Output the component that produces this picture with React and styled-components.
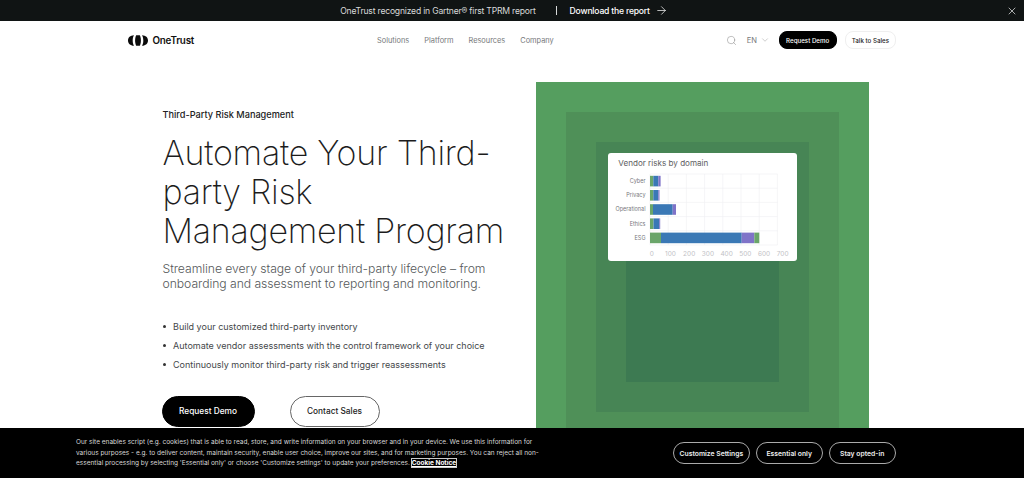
import styled, { createGlobalStyle } from "styled-components";
import { ArrowRight, ChevronDown, Search, X } from "lucide-react";

const GlobalStyle = createGlobalStyle`
  html, body {
    margin: 0;
    padding: 0;
    background: #fff;
    font-family: Inter, "Liberation Sans", sans-serif;
    overflow: hidden;
  }
`;

const GREEN = "#6aa56a";
const BLUE = "#3a78b5";
const PURPLE = "#7f73c8";

// bar segments are in chart pixels, read straight off the picture
const bars = [
  { label: "Cyber", parts: [[GREEN, 3.3], [BLUE, 5], [PURPLE, 2.3]] },
  { label: "Privacy", parts: [[GREEN, 3.3], [BLUE, 5], [PURPLE, 1.2]] },
  { label: "Operational", parts: [[GREEN, 3], [BLUE, 19.7], [PURPLE, 3.3]] },
  { label: "Ethics", parts: [[GREEN, 3.5], [BLUE, 5.7], [PURPLE, 1]] },
  { label: "ESG", parts: [[GREEN, 11], [BLUE, 80.7], [PURPLE, 12.6], [GREEN, 5]] },
];

function Chart() {
  const x0 = 42;
  const top = 21;
  const rowH = 14.2;
  return (
    <svg width="189" height="108.5" viewBox="0 0 189 108.5">
      {[0, 1, 2, 3, 4, 5, 6, 7].map((i) => (
        <line key={i} x1={x0 + i * 18.2} x2={x0 + i * 18.2} y1={top} y2={top + rowH * 5} stroke="#eeeef1" strokeWidth="0.6" />
      ))}
      {[0, 1, 2, 3, 4, 5].map((i) => (
        <line key={i} x1={x0} x2={x0 + 127.5} y1={top + i * rowH} y2={top + i * rowH} stroke="#eeeef1" strokeWidth="0.6" />
      ))}
      {bars.map((bar, i) => {
        let x = x0;
        const y = top + i * rowH + 1.8;
        return (
          <g key={bar.label}>
            <text x={x0 - 4.5} y={y + 7.2} textAnchor="end" fontSize="5.5" fill="#77777c">{bar.label}</text>
            {bar.parts.map(([color, w], j) => {
              const rect = <rect key={j} x={x} y={y} width={w} height={10.6} fill={color} />;
              x += w;
              return rect;
            })}
          </g>
        );
      })}
      {[0, 100, 200, 300, 400, 500, 600, 700].map((v, i) => (
        <text key={v} x={x0 + 1.8 + i * 18.7} y={top + rowH * 5 + 10.8} textAnchor="middle" fontSize="6.5" fill="#c2c2c6">{v}</text>
      ))}
    </svg>
  );
}

export default function App() {
  return (
    <Page>
      <GlobalStyle />
      <Announcement>
        <span>OneTrust recognized in Gartner® first TPRM report</span>
        <Divider />
        <DownloadLink>Download the report</DownloadLink>
        <ArrowRight size={13} strokeWidth={1.3} color="#fff" />
        <CloseButton><X size={12} strokeWidth={1.3} color="#fff" /></CloseButton>
      </Announcement>

      <Nav>
        <Logo>
          <svg width="20" height="11" viewBox="0 0 20 11">
            <path d="M6 0.2 C2.2 0.4 0 2.5 0 5.5 C0 8.5 2.2 10.6 6 10.8 C5 9 4.7 7.4 4.7 5.5 C4.7 3.6 5 2 6 0.2 Z" fill="#0b0b0b" />
            <path d="M8.2 0.2 L11.8 0.2 C12.6 2 12.9 3.6 12.9 5.5 C12.9 7.4 12.6 9 11.8 10.8 L8.2 10.8 C7.4 9 7.1 7.4 7.1 5.5 C7.1 3.6 7.4 2 8.2 0.2 Z" fill="#0b0b0b" />
            <path d="M14 0.2 C17.8 0.4 20 2.5 20 5.5 C20 8.5 17.8 10.6 14 10.8 C15 9 15.3 7.4 15.3 5.5 C15.3 3.6 15 2 14 0.2 Z" fill="#0b0b0b" />
          </svg>
          <LogoText>OneTrust</LogoText>
        </Logo>
        <NavLinks>
          <NavLink>Solutions</NavLink>
          <NavLink>Platform</NavLink>
          <NavLink>Resources</NavLink>
          <NavLink>Company</NavLink>
        </NavLinks>
        <NavRight>
          <Search size={11} strokeWidth={1} color="#777" />
          <Lang>EN <ChevronDown size={10} strokeWidth={1} color="#888" /></Lang>
          <SmallButton $dark>Request Demo</SmallButton>
          <SmallButton>Talk to Sales</SmallButton>
        </NavRight>
      </Nav>

      <Hero>
        <Copy>
          <Eyebrow>Third-Party Risk Management</Eyebrow>
          <Title>Automate Your Third-<br />party Risk<br />Management Program</Title>
          <Lead>Streamline every stage of your third-party lifecycle – from onboarding and assessment to reporting and monitoring.</Lead>
          <Bullets>
            <li>Build your customized third-party inventory</li>
            <li>Automate vendor assessments with the control framework of your choice</li>
            <li>Continuously monitor third-party risk and trigger reassessments</li>
          </Bullets>
          <Actions>
            <CtaButton $dark>Request Demo</CtaButton>
            <CtaButton>Contact Sales</CtaButton>
          </Actions>
        </Copy>
        <Visual>
          <Square $tone="#4f9058">
            <Square $tone="#478555">
              <Square $tone="#3d7a52" />
            </Square>
          </Square>
          <ChartCard>
            <ChartTitle>Vendor risks by domain</ChartTitle>
            <Chart />
          </ChartCard>
        </Visual>
      </Hero>

      <CookieBanner>
        <CookieText>
          Our site enables script (e.g. cookies) that is able to read, store, and write information on your browser and in your device. We use this information for various purposes - e.g. to deliver content, maintain security, enable user choice, improve our sites, and for marketing purposes. You can reject all non-essential processing by selecting 'Essential only' or choose 'Customize settings' to update your preferences. <CookieLink>Cookie Notice</CookieLink>
        </CookieText>
        <CookieActions>
          <CookieButton>Customize Settings</CookieButton>
          <CookieButton>Essential only</CookieButton>
          <CookieButton>Stay opted-in</CookieButton>
        </CookieActions>
      </CookieBanner>
    </Page>
  );
}

const Page = styled.div`
  position: relative;
  width: 1024px;
  height: 480px;
  overflow: hidden;
  background: #fff;
`;

const Announcement = styled.div`
  position: relative;
  height: 21px;
  background: #101414;
  color: #d8dada;
  font-size: 8.6px;
  letter-spacing: -0.2px;
  display: flex;
  align-items: center;
  justify-content: center;
  padding-right: 16px;
`;

const Divider = styled.span`
  width: 1px;
  height: 9px;
  background: #d8dada;
  margin: 0 13px 0 20px;
`;

const DownloadLink = styled.span`
  color: #fff;
  font-weight: 500;
  margin-right: 5px;
`;

const CloseButton = styled.span`
  position: absolute;
  right: 6px;
  top: 5px;
  display: flex;
`;

const Nav = styled.nav`
  height: 38px;
  padding: 0 128px;
  display: grid;
  grid-template-columns: 249px 1fr auto;
  align-items: center;
`;

const Logo = styled.div`
  display: flex;
  align-items: center;
  gap: 4.5px;
`;

const LogoText = styled.span`
  font-size: 9.8px;
  font-weight: 600;
  color: #111;
  letter-spacing: -0.2px;
`;

const NavLinks = styled.div`
  display: flex;
  gap: 15px;
`;

const NavLink = styled.span`
  font-size: 7.4px;
  color: #77797b;
`;

const NavRight = styled.div`
  display: flex;
  align-items: center;
`;

const Lang = styled.span`
  display: flex;
  align-items: center;
  gap: 3px;
  font-size: 7.6px;
  color: #77797b;
  margin: 0 8.5px 0 9.5px;
`;

const SmallButton = styled.span`
  height: 16px;
  border-radius: 8px;
  padding: 0 ${(p) => (p.$dark ? "6.5px" : "6px")};
  margin-right: ${(p) => (p.$dark ? "8px" : "0")};
  display: flex;
  align-items: center;
  font-size: 6.2px;
  font-weight: 500;
  background: ${(p) => (p.$dark ? "#000" : "#fff")};
  color: ${(p) => (p.$dark ? "#fff" : "#222")};
  border: 1px solid ${(p) => (p.$dark ? "#000" : "#efefef")};
`;

const Hero = styled.main`
  padding: 23px 154.7px 0 162.5px;
  display: flex;
  justify-content: space-between;
  align-items: flex-start;
`;

const Copy = styled.div`
  padding-top: 27px;
  width: 350px;
`;

const Eyebrow = styled.div`
  font-size: 9.2px;
  font-weight: 500;
  color: #222;
  line-height: 12px;
`;

const Title = styled.h1`
  margin: 12px 0 0;
  font-size: 34px;
  line-height: 39px;
  font-weight: 200;
  letter-spacing: -0.25px;
  color: #1c1c1c;
  white-space: nowrap;
`;

const Lead = styled.p`
  margin: 11px 0 0;
  font-size: 12.2px;
  line-height: 15.3px;
  font-weight: 300;
  letter-spacing: -0.05px;
  color: #55585a;
  width: 340px;
`;

const Bullets = styled.ul`
  list-style: none;
  margin: 29px 0 0;
  padding: 0;
  font-size: 9px;
  color: #44474a;
  line-height: 12px;
  white-space: nowrap;

  li {
    display: flex;
    align-items: center;
    gap: 7.5px;
    margin-bottom: 7px;
  }

  li::before {
    content: "";
    width: 3px;
    height: 3px;
    border-radius: 50%;
    background: #333;
  }
`;

const Actions = styled.div`
  margin: 25px 0 0 -1px;
  display: flex;
  gap: 35px;
`;

const CtaButton = styled.span`
  width: ${(p) => (p.$dark ? "93px" : "90px")};
  height: 31px;
  box-sizing: border-box;
  border-radius: 16px;
  display: flex;
  align-items: center;
  justify-content: center;
  font-size: 8.3px;
  font-weight: 500;
  background: ${(p) => (p.$dark ? "#000" : "#fff")};
  color: ${(p) => (p.$dark ? "#fff" : "#222")};
  border: 1px solid ${(p) => (p.$dark ? "#000" : "#666")};
`;

const Visual = styled.div`
  position: relative;
  width: 333px;
  height: 390px;
  background: #559e5f;
  display: flow-root;
`;

const Square = styled.div`
  background: ${(p) => p.$tone};
  height: calc(100% - 60px);
  margin: 30px;
  display: flow-root;
`;

const ChartCard = styled.div`
  position: absolute;
  left: 72px;
  top: 70.5px;
  width: 189px;
  height: 108.5px;
  background: #fff;
  border-radius: 3px;
`;

const ChartTitle = styled.div`
  position: absolute;
  left: 10px;
  top: 5px;
  font-size: 8.1px;
  color: #5e5e62;
`;

const CookieBanner = styled.div`
  position: absolute;
  left: 0;
  right: 0;
  top: 428px;
  height: 50px;
  background: #000;
  display: flex;
  align-items: center;
  padding-left: 76px;
  box-sizing: border-box;
`;

const CookieText = styled.p`
  margin: 0;
  width: 464px;
  flex: none;
  font-size: 6.5px;
  line-height: 10.4px;
  color: #d8d8d8;
`;

const CookieLink = styled.span`
  color: #fff;
  font-weight: 700;
  text-decoration: underline;
  outline: 1px solid #ccc;
`;

const CookieActions = styled.div`
  margin-left: 133px;
  display: flex;
  gap: 6px;
`;

const CookieButton = styled.span`
  height: 22px;
  padding: 0 5.5px;
  min-width: 67px;
  box-sizing: border-box;
  border: 1px solid #aaa;
  border-radius: 11px;
  display: flex;
  align-items: center;
  justify-content: center;
  font-size: 6.8px;
  font-weight: 600;
  color: #eee;
`;
